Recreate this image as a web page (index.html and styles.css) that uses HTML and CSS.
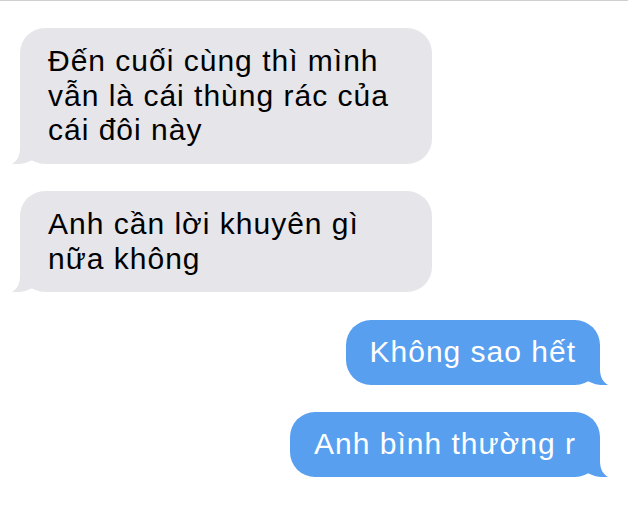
FILE: index.html
```html
<!DOCTYPE html>
<html>
    <head>
        <title>Messages</title>
        <link rel="stylesheet" href="styles.css">
    </head>
    <body>
        <div class="chat">
            <div class="msg them">
                Đến cuối cùng thì mình vẫn là cái thùng rác của cái đôi này
                <svg class="tail" viewBox="0 0 30 30"><path d="M8 0 L8 14 C8 22 5 27 0 30 C10 31 18 28 26 23 L26 0 Z"/></svg>
            </div>
            <div class="msg them">
                Anh cần lời khuyên gì nữa không
                <svg class="tail" viewBox="0 0 30 30"><path d="M8 0 L8 14 C8 22 5 27 0 30 C10 31 18 28 26 23 L26 0 Z"/></svg>
            </div>
            <div class="msg me">
                Không sao hết
                <svg class="tail" viewBox="0 0 30 30"><path d="M8 0 L8 14 C8 22 5 27 0 30 C10 31 18 28 26 23 L26 0 Z"/></svg>
            </div>
            <div class="msg me">
                Anh bình thường r
                <svg class="tail" viewBox="0 0 30 30"><path d="M8 0 L8 14 C8 22 5 27 0 30 C10 31 18 28 26 23 L26 0 Z"/></svg>
            </div>
        </div>
    </body>
</html>
```

FILE: styles.css
```css
* {
    margin: 0;
    padding: 0;
    box-sizing: border-box;
}
body {
    font-family: "Liberation Sans", Arial, sans-serif;
    background-color: #fff;
    border-top: 1px solid #cfcfcf;
}
.chat {
    display: flex;
    flex-direction: column;
    gap: 27.5px;
    padding: 27px 28px 0 20px;
}
.msg {
    position: relative;
    max-width: 412px;
    font-size: 30px;
    line-height: 34.5px;
    letter-spacing: 1px;
    padding: 16px 24px 16px 28px;
    border-radius: 25px;
}
.tail {
    position: absolute;
    bottom: 0;
    width: 30px;
    height: 30px;
}
.them {
    align-self: flex-start;
    background-color: #e5e5ea;
    color: #000;
}
.them .tail {
    left: -8px;
    fill: #e5e5ea;
}
.me {
    align-self: flex-end;
    background-color: #589ff0;
    color: #fff;
    padding: 15px 24px 15.5px;
}
.me .tail {
    right: -8px;
    fill: #589ff0;
    transform: scaleX(-1);
}
```
